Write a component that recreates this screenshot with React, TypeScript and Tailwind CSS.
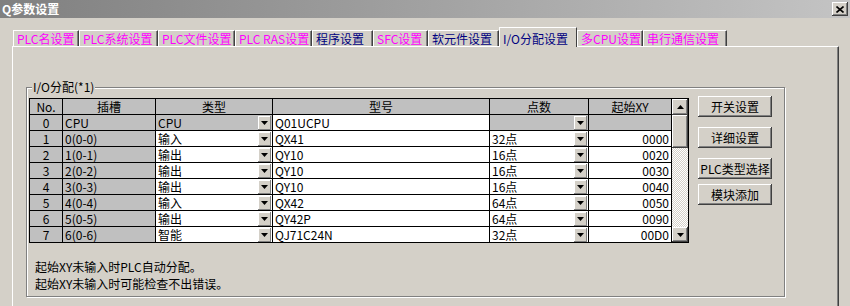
import React from 'react';

const TABS = [
  { label: 'PLC名设置', w: 'w-[66px]', pink: true },
  { label: 'PLC系统设置', w: 'w-[79px]', pink: true },
  { label: 'PLC文件设置', w: 'w-[77px]', pink: true },
  { label: 'PLC RAS设置', w: 'w-[77px]', pink: true },
  { label: '程序设置', w: 'w-[61px]', pink: false },
  { label: 'SFC设置', w: 'w-[55px]', pink: true },
  { label: '软元件设置', w: 'w-[71px]', pink: false },
  { label: 'I/O分配设置', w: 'w-[78px]', pink: false, active: true },
  { label: '多CPU设置', w: 'w-[66px]', pink: true },
  { label: '串行通信设置', w: 'w-[84px]', pink: true },
];

const COLS = ['w-[33px]', 'w-[93px]', 'w-[117px]', 'w-[217px]', 'w-[99px]', 'w-[83px]'];
const HEADERS = ['No.', '插槽', '类型', '型号', '点数', '起始XY'];

const ROWS = [
  ['0', 'CPU', 'CPU', 'Q01UCPU', '', ''],
  ['1', '0(0-0)', '输入', 'QX41', '32点', '0000'],
  ['2', '1(0-1)', '输出', 'QY10', '16点', '0020'],
  ['3', '2(0-2)', '输出', 'QY10', '16点', '0030'],
  ['4', '3(0-3)', '输出', 'QY10', '16点', '0040'],
  ['5', '4(0-4)', '输入', 'QX42', '64点', '0050'],
  ['6', '5(0-5)', '输出', 'QY42P', '64点', '0090'],
  ['7', '6(0-6)', '智能', 'QJ71C24N', '32点', '00D0'],
];

const raised = 'bg-[#d4d0c8] shadow-[inset_-1px_-1px_0_#404040,inset_1px_1px_0_#ffffff,inset_-2px_-2px_0_#808080]';

function Arrow({ up }: { up?: boolean }) {
  return (
    <svg width="7" height="4" viewBox="0 0 7 4">
      <polygon points={up ? '0,4 7,4 3.5,0' : '0,0 7,0 3.5,4'} fill="#000" />
    </svg>
  );
}

function DropBtn() {
  return (
    <div className="w-[13px] h-[14px] mr-[1px] shrink-0 flex items-center justify-center bg-[#d4d0c8] shadow-[inset_-1px_-1px_0_#808080,inset_1px_1px_0_#ffffff]">
      <Arrow />
    </div>
  );
}

function Cell({ w, gray, align, combo, children }: { w: string; gray?: boolean; align?: 'center' | 'right'; combo?: boolean; children?: React.ReactNode }) {
  return (
    <div className={`${w} h-[16px] shrink-0 flex items-center border-r border-b border-black ${gray ? 'bg-[#c0c0c0]' : 'bg-white'}`}>
      <span className={`flex-1 min-w-0 whitespace-nowrap overflow-hidden px-[2px] leading-[15px] ${align === 'center' ? 'text-center' : align === 'right' ? 'text-right' : ''}`}>
        {children}
      </span>
      {combo && <DropBtn />}
    </div>
  );
}

function SideButton({ label, className }: { label: string; className?: string }) {
  return (
    <div className={`w-[74px] h-[21px] flex items-center justify-center leading-none ${raised} ${className ?? ''}`}>
      {label}
    </div>
  );
}

export default function App() {
  return (
    <div className="w-[850px] h-[306px] overflow-hidden bg-[#d4d0c8] text-[12px] text-black font-['Noto_Sans_CJK_SC',sans-serif]">
      {/* title bar */}
      <div className="h-[18px] flex items-center justify-between bg-gradient-to-r from-[#808080] to-[#c4c4c4]">
        <span className="pl-[2px] text-white font-bold leading-none">Q参数设置</span>
        <div className={`w-[16px] h-[14px] mr-[2px] flex items-center justify-center ${raised}`}>
          <svg width="8" height="7" viewBox="0 0 8 7">
            <path d="M0.5 0.5L7.5 6.5M7.5 0.5L0.5 6.5" stroke="#000" strokeWidth="1.6" />
          </svg>
        </div>
      </div>

      {/* tabs */}
      <div className="mt-[9px] h-[20px] pl-[13px] flex items-end">
        {TABS.map((t) =>
          t.active ? (
            <div key={t.label} className={`${t.w} h-[20px] relative z-10 shrink-0 bg-[#d4d0c8] border-l border-t border-white border-r border-r-[#404040] pl-[3px] pt-[3px] leading-[16px] text-[#000080] whitespace-nowrap`}>
              {t.label}
            </div>
          ) : (
            <div key={t.label} className={`${t.w} h-[16px] mb-[1px] shrink-0 bg-[#d4d0c8] border-l border-t border-white border-r border-r-[#404040] shadow-[inset_-1px_0_0_#808080] pl-[3px] leading-[15px] whitespace-nowrap ${t.pink ? 'text-[#ff00ff]' : 'text-[#000080]'}`}>
              {t.label}
            </div>
          )
        )}
      </div>

      {/* tab panel */}
      <div className="-mt-[1px] ml-[12px] w-[827px] h-[262px] border-l border-t border-white border-r border-r-[#404040] shadow-[inset_-1px_0_0_#808080]">
        <div className="relative mt-[40px] ml-[13px] w-[759px] h-[210px] border border-[#808080] shadow-[1px_1px_0_#ffffff,inset_1px_1px_0_#ffffff]">
          <span className="absolute left-[5px] -top-[9px] px-[1px] bg-[#d4d0c8] leading-[16px]">I/O分配(*1)</span>

          <div className="pt-[8px] pl-[2px] flex items-start">
            {/* grid + scrollbar */}
            <div className="mt-[2px] flex border-l border-t border-r border-black">
              <div className="flex flex-col">
                <div className="flex">
                  {HEADERS.map((h, i) => (
                    <Cell key={h} w={COLS[i]} gray align="center">
                      <span className="underline underline-offset-[2px]">{h}</span>
                    </Cell>
                  ))}
                </div>
                {ROWS.map((r, ri) => (
                  <div key={r[0]} className="flex">
                    <Cell w={COLS[0]} gray align="center">{r[0]}</Cell>
                    <Cell w={COLS[1]} gray>{r[1]}</Cell>
                    <Cell w={COLS[2]} gray={ri === 0} combo>{r[2]}</Cell>
                    <Cell w={COLS[3]}>{r[3]}</Cell>
                    <Cell w={COLS[4]} gray={ri === 0} combo>{r[4]}</Cell>
                    <Cell w={COLS[5]} gray={ri === 0} align="right">{r[5]}</Cell>
                  </div>
                ))}
              </div>
              <div className="w-[16px] flex flex-col border-b border-black">
                <div className={`h-[16px] flex items-center justify-center ${raised}`}><Arrow up /></div>
                <div className={`h-[33px] ${raised}`} />
                <div className="flex-1 bg-[image:repeating-conic-gradient(#d4d0c8_0_25%,#ffffff_0_50%)] bg-[length:2px_2px]" />
                <div className={`h-[15px] flex items-center justify-center ${raised}`}><Arrow /></div>
              </div>
            </div>

            {/* side buttons */}
            <div className="ml-[9px] flex flex-col">
              <SideButton label="开关设置" />
              <SideButton label="详细设置" className="mt-[10px]" />
              <SideButton label="PLC类型选择" className="mt-[10px]" />
              <SideButton label="模块添加" className="mt-[5px]" />
            </div>
          </div>

          <div className="mt-[15px] pl-[8px] leading-[17px]">
            <p>起始XY未输入时PLC自动分配。</p>
            <p>起始XY未输入时可能检查不出错误。</p>
          </div>
        </div>
      </div>
    </div>
  );
}
